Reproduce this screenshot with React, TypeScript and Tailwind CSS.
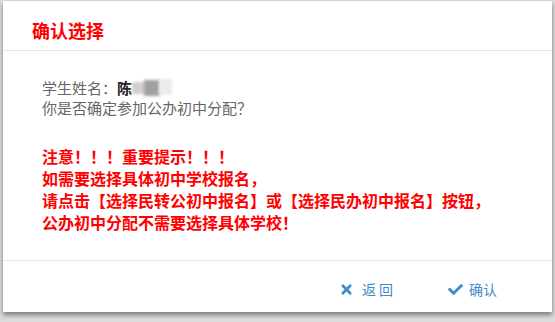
import { FaCheck, FaTimes } from "react-icons/fa";

export default function App() {
  return (
    <div
      className="w-[555px] h-[322px] bg-[#dcdcdc] pl-[3px] pt-[1px] overflow-hidden"
      style={{ fontFamily: '"Noto Sans CJK SC", "Noto Sans", sans-serif' }}
    >
      {/* Modal */}
      <div className="w-[549px] h-[311px] bg-white flex flex-col shadow-[0_3px_5px_rgba(0,0,0,0.45)]">
        {/* Header */}
        <div className="h-[50px] shrink-0 flex items-center pl-[29px] pt-[8px] border-b border-[#e5e5e5]">
          <h3 className="text-[18px] font-bold text-[#ff0000] leading-none">确认选择</h3>
        </div>

        {/* Body */}
        <div className="flex-1 pl-[39px] pt-[27px]">
          <div className="text-[15px] leading-[20px] text-[#666]">
            <div className="flex items-center">
              <span>学生姓名：</span>
              <span className="text-[#222] font-bold">陈</span>
              <span className="relative inline-block w-[42px] h-[20px]">
                <span className="absolute left-[0px] top-[4px] w-[14px] h-[12px] bg-[#cfcfcf] blur-[1.5px]" />
                <span className="absolute left-[12px] top-[2px] w-[16px] h-[16px] bg-[#a0a0a0] blur-[1.5px]" />
                <span className="absolute left-[27px] top-[1px] w-[13px] h-[16px] bg-[#ebebeb] blur-[1.5px]" />
              </span>
            </div>
            <div>你是否确定参加公办初中分配？</div>
          </div>

          <div className="mt-[27px] text-[16px] leading-[22px] font-bold text-[#ff0000]">
            <div>注意！！！重要提示！！！</div>
            <div>如需要选择具体初中学校报名，</div>
            <div>请点击【选择民转公初中报名】或【选择民办初中报名】按钮，</div>
            <div>公办初中分配不需要选择具体学校！</div>
          </div>
        </div>

        {/* Footer */}
        <div className="h-[52px] shrink-0 border-t border-[#e5e5e5] flex items-center justify-end gap-[52px] pr-[55px] pt-[6px] text-[14px] text-[#428bca]">
          <button className="flex items-center gap-[8px]">
            <FaTimes className="w-[15px] h-[15px]" />
            <span className="tracking-[3px]">返回</span>
          </button>
          <button className="flex items-center gap-[6px]">
            <FaCheck className="w-[15px] h-[15px]" />
            <span>确认</span>
          </button>
        </div>
      </div>
    </div>
  );
}
